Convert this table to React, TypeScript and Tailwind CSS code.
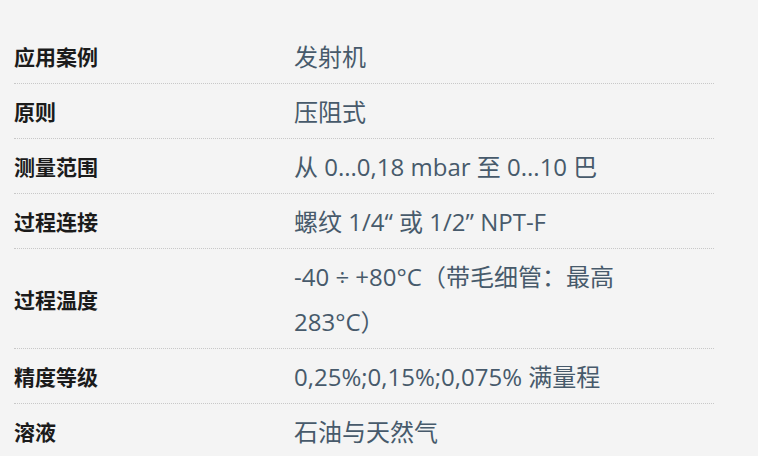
import React from "react";

const rows: [string, string][] = [
  ["应用案例", "发射机"],
  ["原则", "压阻式"],
  ["测量范围", "从 0...0,18 mbar 至 0...10 巴"],
  ["过程连接", "螺纹 1/4“ 或 1/2” NPT-F"],
  ["过程温度", "-40 ÷ +80°C（带毛细管：最高 283°C）"],
  ["精度等级", "0,25%;0,15%;0,075% 满量程"],
  ["溶液", "石油与天然气"],
];

export default function App() {
  return (
    <div className="w-[758px] h-[456px] bg-[#f4f4f4] overflow-hidden">
      <div className="ml-[14px] mt-[29px] w-[700px]">
        {rows.map(([k, v], i) => (
          <div
            key={i}
            className={`flex items-center pt-[5px] pb-[4px] ${i < rows.length - 1 ? "border-b border-dotted border-[#c8c8c8]" : ""}`}
          >
            <div
              className="w-[280px] shrink-0 text-[21px] font-bold text-[#1b1b1b] leading-[45px]"
              style={{ fontFamily: '"Noto Sans CJK SC", sans-serif' }}
            >
              {k}
            </div>
            <div
              className="flex-1 pr-[60px] text-[24px] text-[#475a6b] leading-[45px]"
              style={{ fontFamily: '"Open Sans", "Noto Sans CJK SC", sans-serif' }}
            >
              {v}
            </div>
          </div>
        ))}
      </div>
    </div>
  );
}
